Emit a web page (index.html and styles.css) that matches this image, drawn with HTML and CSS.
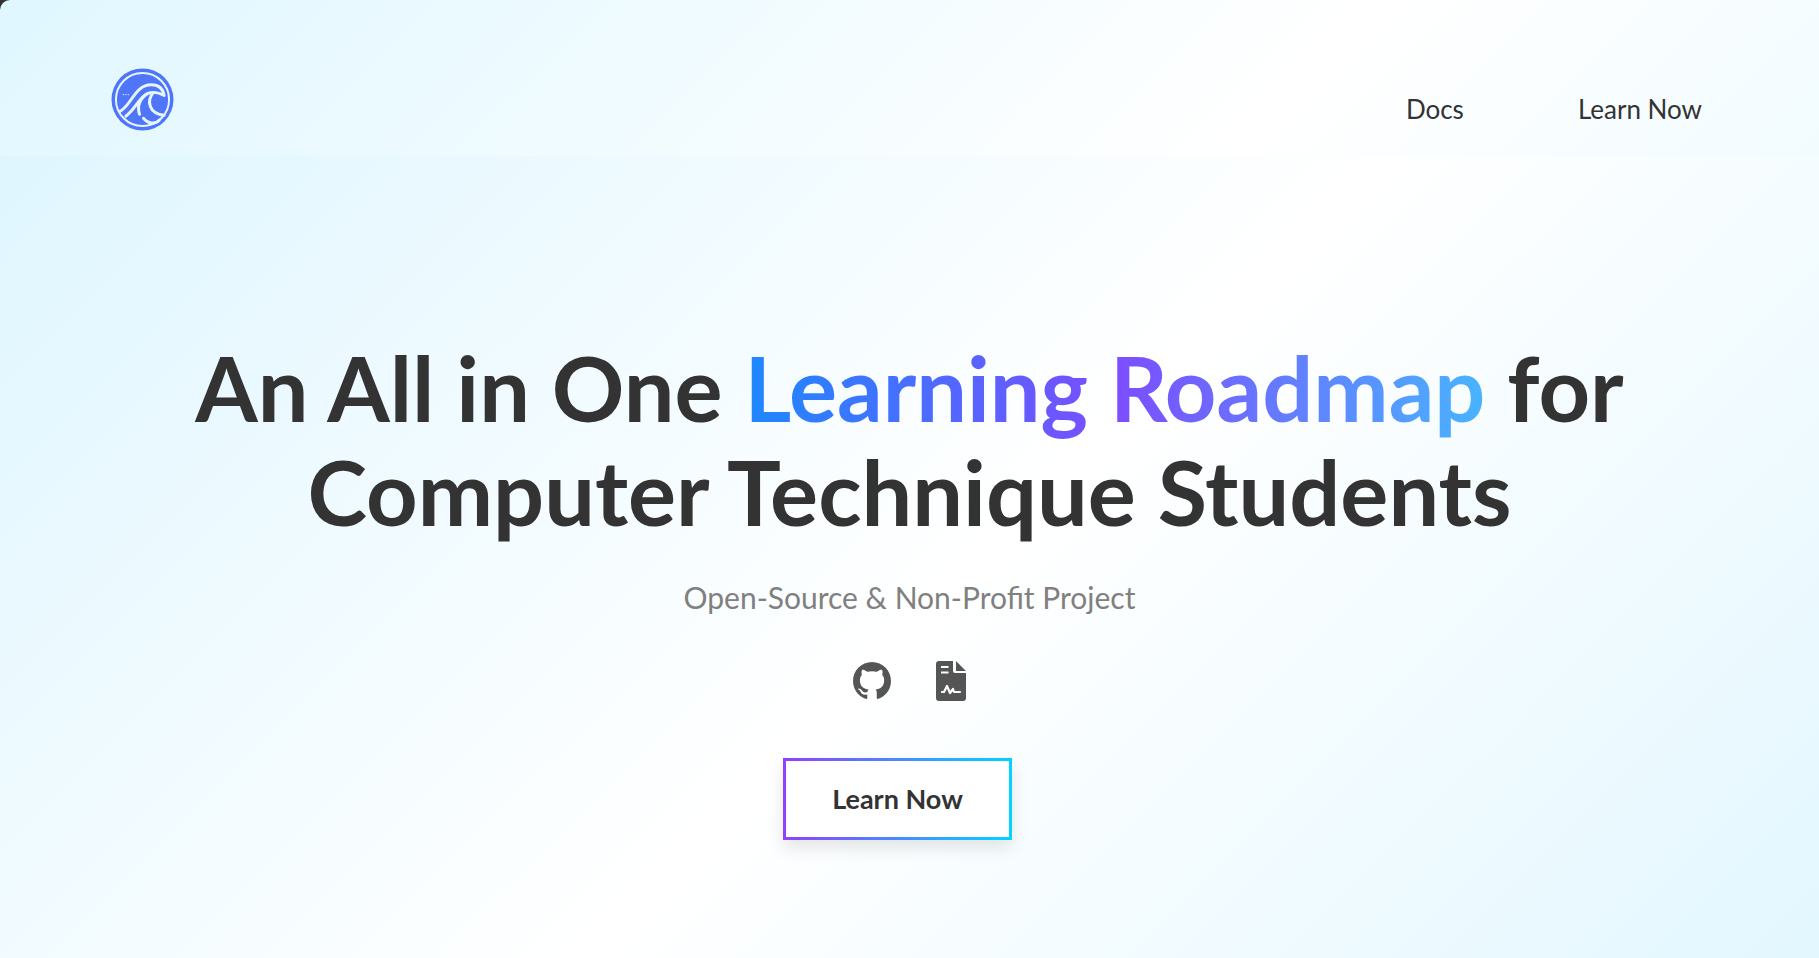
FILE: index.html
```
<!DOCTYPE html>
<html lang="en">
<head>
<meta charset="utf-8">
<title>Learning Roadmap</title>
<link rel="stylesheet" href="styles.css">
</head>
<body>
<div class="page">
  <header class="header">
    <a class="logo" href="#" aria-label="Home">
      <svg viewBox="0 0 64 64" width="63" height="63" fill="none" stroke-linecap="round" stroke-linejoin="round">
        <circle cx="32" cy="32" r="31.5" fill="#4f75fa"/>
        <circle cx="32" cy="32" r="27" stroke="#e6f6ff" stroke-width="2"/>
        <g stroke="#e6f6ff" stroke-width="3">
          <path d="M9 44C21 38 24 17 41 17C49 17 53 22 54 28C49 25 42 24 37 26C29 29 25 42 15 49"/>
          <path d="M37 26C30 31 26 38 29 47"/>
          <path d="M43 25C36 33 38 46 54 48"/>
          <path d="M33 51C38 57 45 57 49 53"/>
        </g>
        <path d="M12.500 27h.1M15 27h.1M17.500 27h.1" stroke="#e6f6ff" stroke-width="1.300"/>
      </svg>
    </a>
    <nav class="nav">
      <a href="#">Docs</a>
      <a href="#">Learn Now</a>
    </nav>
  </header>
  <main class="hero">
    <h1 class="title">An All in One <span class="accent">Learning Roadmap</span> for<br>Computer Technique Students</h1>
    <p class="subtitle">Open-Source &amp; Non-Profit Project</p>
    <div class="icons">
      <a href="#" aria-label="GitHub">
        <svg viewBox="0 0 16 16" width="38" height="38" fill="#555"><path d="M8 0C3.580 0 0 3.580 0 8c0 3.540 2.290 6.530 5.470 7.590.4.070.55-.17.55-.38 0-.19-.01-.82-.01-1.490-2.010.37-2.530-.49-2.690-.94-.09-.23-.48-.94-.82-1.130-.28-.15-.68-.52-.01-.53.63-.01 1.080.58 1.230.82.72 1.210 1.870.87 2.330.66.070-.52.28-.87.51-1.070-1.780-.2-3.640-.89-3.640-3.950 0-.87.31-1.590.82-2.150-.08-.2-.36-1.020.08-2.120 0 0 .67-.21 2.200.82.64-.18 1.320-.27 2-.27s1.360.09 2 .27c1.530-1.040 2.200-.82 2.200-.82.44 1.100.16 1.920.08 2.120.51.56.82 1.270.82 2.150 0 3.070-1.870 3.750-3.650 3.950.29.25.54.73.54 1.480 0 1.070-.01 1.930-.01 2.200 0 .21.15.46.55.38A8.010 8.010 0 0 0 16 8c0-4.420-3.580-8-8-8z"/></svg>
      </a>
      <a href="#" aria-label="License">
        <svg viewBox="0 0 30 40" width="30" height="40">
          <path d="M3 0H17V10Q17 12 19 12H30V37Q30 40 27 40H3Q0 40 0 37V3Q0 0 3 0ZM20 0L30 10H20Z" fill="#555"/>
          <path d="M5 6H12.500M5 11.500H12.500" stroke="#fff" stroke-width="2"/>
          <path d="M6 31H8L11 25L14 32L17 28L18 31H24" fill="none" stroke="#fff" stroke-width="2.200" stroke-linecap="round" stroke-linejoin="round"/>
        </svg>
      </a>
    </div>
    <button class="cta" type="button">Learn Now</button>
  </main>
</div>
</body>
</html>
```
FILE: styles.css
```
* { box-sizing: border-box; }
body { margin: 0; background: #333; font-family: Lato, sans-serif; color: #333; }
.page { min-height: 100vh; display: flex; flex-direction: column; border-top-left-radius: 10px; overflow: hidden; background: linear-gradient(135deg, #e0f7ff, #fff 50%, #e0f7ff); }
.header { display: flex; justify-content: space-between; align-items: flex-start; padding: 68px 117px 25px 111px; }
.logo, .icons a { display: flex; }
.nav { display: flex; gap: 114px; padding-top: 22px; font-size: 26px; line-height: 38px; }
.nav a { color: #333; text-decoration: none; }
.hero { flex: 1; display: flex; flex-direction: column; align-items: center; padding-top: 179px; text-align: center; background: linear-gradient(135deg, #dff6ff, #fff 50%, #dff6ff) 0 0 / 100% 100vh no-repeat; }
.title { margin: 0; font-size: 90px; line-height: 104px; font-weight: 700; }
.accent { color: transparent; background: linear-gradient(90deg, #1e88ff, #7c4dff 50%, #48b4ff); background-clip: text; }
.subtitle { margin: 32px 0 0; font-size: 30px; line-height: 44px; color: #808080; }
.icons { display: flex; align-items: center; gap: 45px; margin-top: 42px; }
.cta { margin: 57px 24px 0 0; padding: 20px 46px; border: 3px solid; border-image: linear-gradient(90deg, #9040ff, #00d4ff) 1; background: #fff; box-shadow: 0 8px 16px rgba(0, 0, 0, .1); font: 700 27px/36px Lato, sans-serif; color: #333; }
```
